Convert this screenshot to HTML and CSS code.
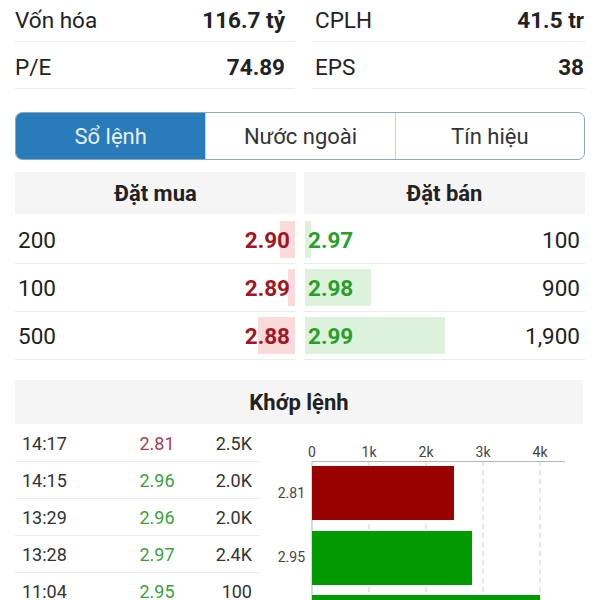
FILE: index.html
```html
<!DOCTYPE html>
<html lang="vi">
<head>
    <meta charset="UTF-8">
    <meta name="viewport" content="width=device-width, initial-scale=1.0">
    <title>Sổ lệnh</title>
    <link rel="stylesheet" href="styles.css">
</head>
<body>
    <div class="page">
        <!-- Chỉ số cơ bản -->
        <div class="stats">
            <div class="stat"><span>Vốn hóa</span><b>116.7 tỷ</b></div>
            <div class="stat"><span>CPLH</span><b>41.5 tr</b></div>
            <div class="stat"><span>P/E</span><b>74.89</b></div>
            <div class="stat"><span>EPS</span><b>38</b></div>
        </div>

        <!-- Tabs -->
        <div class="tabs">
            <div class="tab active">Sổ lệnh</div>
            <div class="tab">Nước ngoài</div>
            <div class="tab">Tín hiệu</div>
        </div>

        <!-- Sổ lệnh -->
        <div class="book">
            <div class="side buy">
                <div class="side-head">Đặt mua</div>
                <div class="row"><span class="qty">200</span><span class="price down">2.90</span><i class="bar" style="width:15px"></i></div>
                <div class="row"><span class="qty">100</span><span class="price down">2.89</span><i class="bar" style="width:7px"></i></div>
                <div class="row"><span class="qty">500</span><span class="price down">2.88</span><i class="bar" style="width:37px"></i></div>
            </div>
            <div class="side sell">
                <div class="side-head">Đặt bán</div>
                <div class="row"><span class="price up">2.97</span><span class="qty">100</span><i class="bar" style="width:6px"></i></div>
                <div class="row"><span class="price up">2.98</span><span class="qty">900</span><i class="bar" style="width:66px"></i></div>
                <div class="row"><span class="price up">2.99</span><span class="qty">1,900</span><i class="bar" style="width:140px"></i></div>
            </div>
        </div>

        <!-- Khớp lệnh -->
        <div class="match-head">Khớp lệnh</div>
        <div class="match">
            <div class="trades">
                <div class="trade"><span>14:17</span><span class="down">2.81</span><span class="vol">2.5K</span></div>
                <div class="trade"><span>14:15</span><span class="up">2.96</span><span class="vol">2.0K</span></div>
                <div class="trade"><span>13:29</span><span class="up">2.96</span><span class="vol">2.0K</span></div>
                <div class="trade"><span>13:28</span><span class="up">2.97</span><span class="vol">2.4K</span></div>
                <div class="trade"><span>11:04</span><span class="up">2.95</span><span class="vol">100</span></div>
            </div>
            <svg class="chart" width="320" height="180" viewBox="0 0 320 180">
                <g stroke="#cfcfcf" stroke-dasharray="5 4">
                    <line x1="104" y1="36" x2="104" y2="180"/>
                    <line x1="161" y1="36" x2="161" y2="180"/>
                    <line x1="218" y1="36" x2="218" y2="180"/>
                    <line x1="275" y1="36" x2="275" y2="180"/>
                </g>
                <line x1="47" y1="36.5" x2="300" y2="36.5" stroke="#b5b5b5"/>
                <line x1="47" y1="36" x2="47" y2="180" stroke="#b5b5b5"/>
                <g class="axis" text-anchor="middle">
                    <text x="47" y="32">0</text>
                    <text x="104" y="32">1k</text>
                    <text x="161" y="32">2k</text>
                    <text x="218" y="32">3k</text>
                    <text x="275" y="32">4k</text>
                </g>
                <rect x="47" y="41" width="142" height="54" fill="#990000"/>
                <rect x="47" y="106" width="160" height="54" fill="#009900"/>
                <rect x="47" y="170" width="228" height="54" fill="#009900"/>
                <g class="axis" text-anchor="end">
                    <text x="40" y="73">2.81</text>
                    <text x="40" y="137">2.95</text>
                </g>
            </svg>
        </div>
    </div>
</body>
</html>
```

FILE: styles.css
```css
/* Chung */
body {
    margin: 0;
    font-family: Roboto, "Noto Sans", sans-serif;
    color: #222;
    background-color: #ffffff;
    overflow: hidden;
}

.page {
    padding: 0 15px;
}

.up {
    color: #2a9e2a;
}

.down {
    color: #a3161f;
}

/* Chỉ số */
.stats {
    display: grid;
    grid-template-columns: 280px 1fr;
    column-gap: 17px;
    margin-top: -5px;
}

.stat {
    display: flex;
    justify-content: space-between;
    align-items: center;
    height: 42px;
    padding-top: 4px;
    border-bottom: 1px solid #ececec;
    font-size: 22.5px;
}

.stat:nth-child(odd) {
    padding-right: 10px;
}

.stat:nth-child(even) {
    padding-left: 3px;
    padding-right: 1px;
}

/* Tabs */
.tabs {
    display: grid;
    grid-template-columns: repeat(3, 1fr);
    margin-top: 23px;
    height: 46px;
    border: 1px solid #8aa9ba;
    border-radius: 7px;
    overflow: hidden;
}

.tab {
    display: flex;
    align-items: center;
    justify-content: center;
    font-size: 22px;
    color: #333;
}

.tab + .tab {
    border-left: 1px solid #c9d3d9;
}

.tab.active {
    background-color: #2a7bb9;
    color: #e9f1f8;
}

/* Sổ lệnh */
.book {
    display: grid;
    grid-template-columns: 281px 1fr;
    column-gap: 8px;
    margin-top: 12px;
}

.side-head {
    height: 42px;
    line-height: 44px;
    margin-bottom: 2px;
    text-align: center;
    font-size: 22px;
    font-weight: bold;
    background-color: #f5f5f5;
}

.row {
    position: relative;
    display: flex;
    justify-content: space-between;
    align-items: center;
    height: 47px;
    border-bottom: 1px solid #ececec;
    font-size: 22.5px;
}

.buy .row {
    padding: 0 6px 0 3px;
}

.sell .row {
    padding: 0 5px 0 4px;
}

.row span {
    position: relative;
    z-index: 1;
}

.price {
    font-weight: bold;
}

.bar {
    position: absolute;
    top: 5px;
    bottom: 5px;
}

.buy .bar {
    right: 1px;
    background-color: #fadadb;
}

.sell .bar {
    left: 1px;
    background-color: #dcf2dc;
}

/* Khớp lệnh */
.match-head {
    margin-top: 20px;
    height: 44px;
    line-height: 46px;
    margin-right: 2px;
    text-align: center;
    font-size: 22px;
    font-weight: bold;
    background-color: #f5f5f5;
}

.match {
    display: flex;
    align-items: flex-start;
}

.trades {
    width: 245px;
    flex-shrink: 0;
    padding-top: 1px;
}

.trade {
    display: grid;
    grid-template-columns: 110px 50px 1fr;
    align-items: center;
    height: 36px;
    padding: 0 8px 0 7px;
    border-bottom: 1px solid #ececec;
    font-size: 18px;
    color: #333;
}

.trade .down {
    color: #a8404c;
}

.trade .up {
    color: #3c9f3c;
}

.trade span:nth-child(2) {
    text-align: center;
}

.trade .vol {
    text-align: right;
}

.chart {
    display: block;
    margin: 1px 0 0 5px;
    flex-shrink: 0;
}

.axis {
    font-family: Roboto, sans-serif;
    font-size: 14px;
    fill: #444;
}
```
